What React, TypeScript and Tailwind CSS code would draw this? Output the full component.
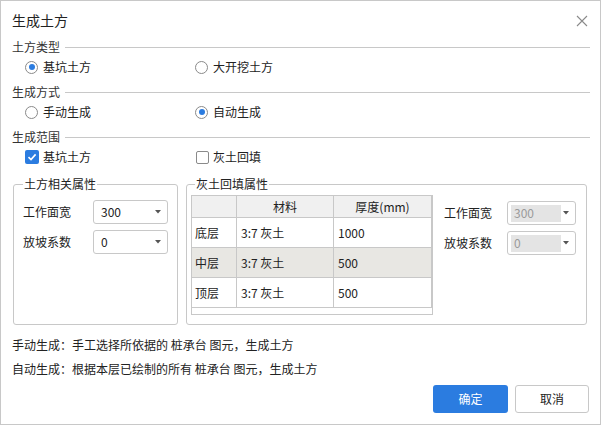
import React from 'react'

const font = { fontFamily: '"Noto Sans CJK SC", "Liberation Sans", sans-serif' }

function SectionHeader({ label }: { label: string }) {
  return (
    <div className="flex h-[14px] items-center pr-[10px]">
      <span className="text-[12px] leading-none text-[#333]">{label}</span>
      <div className="ml-[5px] h-px flex-1 bg-[#c8c8c8]" />
    </div>
  )
}

function Radio({ checked, label }: { checked?: boolean; label: string }) {
  return (
    <div className="flex items-center">
      <span className="flex h-[13px] w-[13px] items-center justify-center rounded-full border border-[#8a8a8a] bg-white">
        {checked && <span className="h-[6px] w-[6px] rounded-full bg-[#2b7ce0]" />}
      </span>
      <span className="ml-[5px] text-[12px] leading-none text-[#222]">{label}</span>
    </div>
  )
}

function Check({ checked, label }: { checked?: boolean; label: string }) {
  return (
    <div className="flex items-center">
      {checked ? (
        <span className="flex h-[14px] w-[14px] items-center justify-center rounded-[2px] bg-[#2b7ce0]">
          <svg width="10" height="10" viewBox="0 0 10 10">
            <path d="M1.5 5.2 L4 7.6 L8.6 2.4" stroke="white" strokeWidth="1.6" fill="none" />
          </svg>
        </span>
      ) : (
        <span className="h-[13px] w-[13px] rounded-[2px] border border-[#8a8a8a] bg-white" />
      )}
      <span className="ml-[4px] text-[12px] leading-none text-[#222]">{label}</span>
    </div>
  )
}

function Arrow() {
  return (
    <svg width="6" height="4" viewBox="0 0 6 4">
      <path d="M0 0 L6 0 L3 3.5 Z" fill="#555" />
    </svg>
  )
}

function Select({ value, disabled }: { value: string; disabled?: boolean }) {
  return (
    <div className="flex h-[24px] items-center rounded-[3px] border border-[#c8c8c8] bg-white pr-[6px]">
      {disabled ? (
        <div className="ml-[3px] flex h-[17px] w-[50px] items-center bg-[#e4e4e4] pl-[3px] text-[12px] text-[#9a9a9a]">
          {value}
        </div>
      ) : (
        <span className="pl-[7px] text-[12px] text-[#222]">{value}</span>
      )}
      <span className="ml-auto flex">
        <Arrow />
      </span>
    </div>
  )
}

function FieldRow({ label, value, disabled, selW }: { label: string; value: string; disabled?: boolean; selW: string }) {
  return (
    <div className="flex items-center">
      <span className={`text-[12px] text-[#222] ${disabled ? 'w-[63px]' : 'w-[70px]'}`}>{label}</span>
      <div className={selW}>
        <Select value={value} disabled={disabled} />
      </div>
    </div>
  )
}

const rows = [
  { name: '底层', mat: '3:7 灰土', t: '1000' },
  { name: '中层', mat: '3:7 灰土', t: '500', sel: true },
  { name: '顶层', mat: '3:7 灰土', t: '500' },
]

export default function App() {
  return (
    <div style={font} className="h-[425px] w-[601px] border border-[#c8c8c8] bg-white text-[#222]">
      <div className="flex h-[39px] items-center justify-between pl-[11px] pr-[12px]">
        <span className="text-[14px] text-[#222]">生成土方</span>
        <svg width="12" height="12" viewBox="0 0 12 12">
          <path d="M1 1 L11 11 M11 1 L1 11" stroke="#8a8a8a" strokeWidth="1.1" />
        </svg>
      </div>
      <div className="pl-[11px]">
        <SectionHeader label="土方类型" />
        <div className="flex h-[26px] items-center pl-[13px]">
          <div className="w-[170px]">
            <Radio checked label="基坑土方" />
          </div>
          <Radio label="大开挖土方" />
        </div>
        <div className="mt-[5px]">
          <SectionHeader label="生成方式" />
        </div>
        <div className="flex h-[26px] items-center pl-[13px]">
          <div className="w-[170px]">
            <Radio label="手动生成" />
          </div>
          <Radio checked label="自动生成" />
        </div>
        <div className="mt-[5px]">
          <SectionHeader label="生成范围" />
        </div>
        <div className="flex h-[26px] items-center pl-[13px]">
          <div className="w-[171px]">
            <Check checked label="基坑土方" />
          </div>
          <Check label="灰土回填" />
        </div>
      </div>

      <div className="mt-[14px] flex gap-[8px] pl-[12px]">
        <div className="relative h-[141px] w-[165px] rounded-[3px] border border-[#c8c8c8]">
          <span className="absolute -top-[9px] left-[9px] bg-white px-[1px] text-[12px] leading-[16px] text-[#222]">土方相关属性</span>
          <div className="flex flex-col gap-[6px] pl-[9px] pt-[15px]">
            <FieldRow label="工作面宽" value="300" selW="w-[75px]" />
            <FieldRow label="放坡系数" value="0" selW="w-[75px]" />
          </div>
        </div>

        <div className="relative flex h-[141px] w-[401px] rounded-[3px] border border-[#c8c8c8]">
          <span className="absolute -top-[9px] left-[8px] bg-white px-[1px] text-[12px] leading-[16px] text-[#222]">灰土回填属性</span>
          <div className="ml-[4px] mt-[10px] flex h-[120px] w-[242px] flex-col border border-[#c8c8c8]">
            <div className="flex h-[22px] border-b border-[#c8c8c8] bg-[#f0f0f0] text-[12px]">
              <div className="w-[45px] border-r border-[#c8c8c8]" />
              <div className="flex w-[97px] items-center justify-center border-r border-[#c8c8c8]">材料</div>
              <div className="flex flex-1 items-center justify-center border-r border-[#c8c8c8]">厚度(mm)</div>
            </div>
            {rows.map((r) => (
              <div
                key={r.name}
                className={`flex h-[30px] border-b border-[#c8c8c8] text-[12px] ${r.sel ? 'bg-[#e8e7e3]' : 'bg-white'}`}
              >
                <div className="flex w-[45px] items-center border-r border-[#c8c8c8] pl-[3px]">{r.name}</div>
                <div className="flex w-[97px] items-center border-r border-[#c8c8c8] pl-[4px]">{r.mat}</div>
                <div className="flex flex-1 items-center border-r border-[#c8c8c8] pl-[4px]">{r.t}</div>
              </div>
            ))}
            <div className="flex-1" />
          </div>
          <div className="ml-[11px] mt-[16px] flex flex-col gap-[6px]">
            <FieldRow label="工作面宽" value="300" disabled selW="w-[69px]" />
            <FieldRow label="放坡系数" value="0" disabled selW="w-[69px]" />
          </div>
        </div>
      </div>

      <div className="mt-[8px] pl-[11px] text-[12px] leading-[24px] text-[#222]">
        <div>手动生成：手工选择所依据的 桩承台 图元，生成土方</div>
        <div>自动生成：根据本层已绘制的所有 桩承台 图元，生成土方</div>
      </div>

      <div className="mt-[4px] flex justify-end gap-[7px] pr-[11px]">
        <button className="h-[28px] w-[75px] rounded-[3px] bg-[#2b7ce0] text-[12px] text-white">确定</button>
        <button className="h-[28px] w-[74px] rounded-[3px] border border-[#c8c8c8] bg-white text-[12px] text-[#222]">取消</button>
      </div>
    </div>
  )
}
